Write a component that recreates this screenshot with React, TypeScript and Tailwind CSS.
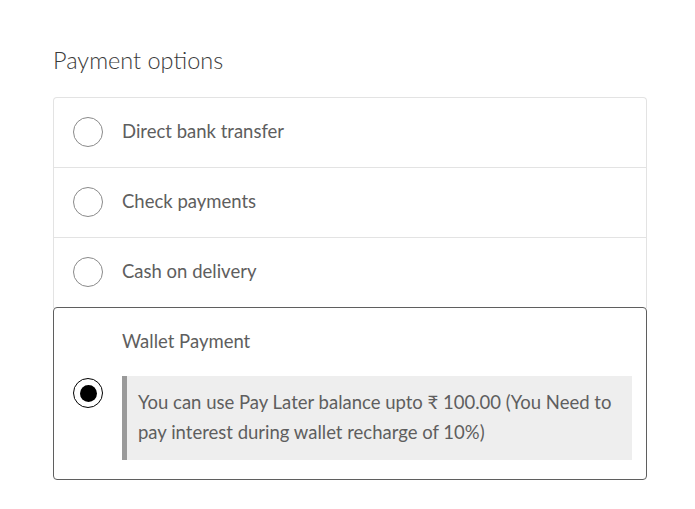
import React from "react";

const options = [
  { label: "Direct bank transfer" },
  { label: "Check payments" },
  { label: "Cash on delivery" },
];

function Radio({ checked }: { checked?: boolean }) {
  if (checked) {
    return (
      <span className="w-[30px] h-[30px] shrink-0 rounded-full border-[1.5px] border-black bg-white flex items-center justify-center">
        <span className="w-[17px] h-[17px] rounded-full bg-black" />
      </span>
    );
  }
  return <span className="w-[30px] h-[30px] shrink-0 rounded-full border border-[#8a8a8a] bg-white" />;
}

export default function App() {
  return (
    <div className="w-[695px] h-[509px] bg-white px-[53px] pt-[42px]" style={{ fontFamily: "Lato, 'Noto Sans', sans-serif" }}>
      <h2 className="text-[23.5px] font-light text-[#3a3a3a] leading-[36px]">Payment options</h2>

      <div className="mt-[19px] w-[594px]">
        <div className="border border-b-0 border-[#e3e3e3] rounded-t-[4px]">
          {options.map((o, i) => (
            <div
              key={o.label}
              className={
                "h-[70px] flex items-center gap-[19px] px-[19px] pb-[2px] " +
                (i < options.length - 1 ? "border-b border-[#e3e3e3]" : "")
              }
            >
              <Radio />
              <span className="text-[18.5px] text-[#5e5e5e]">{o.label}</span>
            </div>
          ))}
        </div>

        {/* selected method */}
        <div className="-mt-px border-[1.5px] border-[#5f5f5f] rounded-[4px] flex items-center gap-[19px] pl-[19px] pr-[14px] pt-[18px] pb-[19px]">
          <Radio checked />
          <div className="flex-1 min-w-0">
            <div className="text-[18.5px] leading-[30px] text-[#5e5e5e]">Wallet Payment</div>
            <div className="mt-[20px] bg-[#eeeeee] border-l-[5px] border-[#9a9a9a] pl-[11px] pr-[16px] pt-[11px] pb-[13px] text-[18.5px] leading-[30px] text-[#5e5e5e]">
              You can use Pay Later balance upto ₹ 100.00 (You Need to pay interest during wallet recharge of 10%)
            </div>
          </div>
        </div>
      </div>
    </div>
  );
}
